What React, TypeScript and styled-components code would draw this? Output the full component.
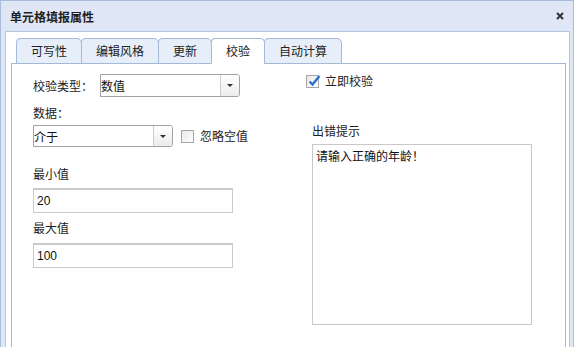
import styled, { createGlobalStyle } from 'styled-components'

const GlobalStyle = createGlobalStyle`
  html, body {
    margin: 0;
    padding: 0;
  }
  body {
    font-family: "Noto Sans CJK SC", "Microsoft YaHei", sans-serif;
    font-size: 12px;
    color: #222;
    background: #fff;
  }
`

const Window = styled.div`
  width: 574px;
  height: 347px;
  box-sizing: border-box;
  display: flex;
  flex-direction: column;
  background: #dfe6f5;
  border: 1px solid #a9bcd9;
  border-bottom: none;
  overflow: hidden;
`

const TitleBar = styled.div`
  height: 30px;
  flex: none;
  display: flex;
  align-items: center;
  justify-content: space-between;
  padding: 0 8px 0 9px;
  font-weight: bold;
  color: #1f1f1f;
`

const CloseButton = styled.button`
  width: 10px;
  height: 10px;
  padding: 0;
  border: none;
  background: transparent;
  display: flex;
  align-items: center;
  justify-content: center;
  cursor: pointer;
`

const Body = styled.div`
  flex: 1;
  display: flex;
  flex-direction: column;
  margin: 0 3px 0 4px;
  padding: 6px 3px 0 5px;
  background: #fff;
  border: 1px solid #b6c7e0;
  border-bottom: none;
  min-height: 0;
`

const TabStrip = styled.div`
  display: flex;
  padding-left: 5px;
  margin-bottom: -1px;
  position: relative;
  z-index: 1;
`

const Tab = styled.div<{ $active?: boolean }>`
  height: 24px;
  line-height: 24px;
  padding: 0 14px;
  border: 1px solid #a3b9d6;
  border-bottom-color: ${({ $active }) => ($active ? '#fff' : '#a3b9d6')};
  border-radius: 4px 5px 0 0;
  background: ${({ $active }) => ($active ? '#fff' : '#e6eef9')};
  color: #222;
  & + & {
    margin-left: -1px;
  }
`

const Panel = styled.div`
  flex: 1;
  display: flex;
  align-items: flex-start;
  padding: 10px 0 0 21px;
  border: 1px solid #a3b9d6;
  border-bottom: none;
`

const LeftColumn = styled.div`
  width: 207px;
  display: flex;
  flex-direction: column;
`

const RightColumn = styled.div`
  margin-left: 66px;
  display: flex;
  flex-direction: column;
`

const FieldRow = styled.div<{ $gap?: number }>`
  display: flex;
  align-items: center;
  margin-top: ${({ $gap }) => $gap ?? 0}px;
  white-space: nowrap;
`

const InlineLabel = styled.span`
  width: 67px;
  line-height: 16px;
`

const Label = styled.div<{ $gap: number; $indent?: number }>`
  line-height: 16px;
  margin-top: ${({ $gap }) => $gap}px;
  padding-left: ${({ $indent }) => $indent ?? 0}px;
`

const SelectBox = styled.div<{ $width: number; $height: number }>`
  box-sizing: border-box;
  width: ${({ $width }) => $width}px;
  height: ${({ $height }) => $height}px;
  flex: none;
  display: flex;
  border: 1px solid #a2a2a2;
  border-radius: 0 3px 3px 0;
  background: #fff;
`

const SelectValue = styled.span`
  flex: 1;
  padding-left: 0;
  display: flex;
  align-items: center;
  color: #111;
`

const SelectArrow = styled.span`
  width: 18px;
  border-left: 1px solid #cdcdcd;
  border-radius: 0 2px 2px 0;
  background: linear-gradient(#ffffff, #ececec);
  display: flex;
  align-items: center;
  justify-content: center;
  &::after {
    content: '';
    border-left: 3px solid transparent;
    border-right: 3px solid transparent;
    border-top: 3px solid #333;
  }
`

const CheckLabel = styled.label<{ $gap?: number }>`
  display: flex;
  align-items: center;
  flex: none;
  gap: 6px;
  margin-left: ${({ $gap }) => $gap ?? 0}px;
  height: 14px;
  line-height: 14px;
  white-space: nowrap;
`

const Box = styled.span`
  box-sizing: border-box;
  width: 13px;
  height: 13px;
  border: 1px solid #a6a6a6;
  background: linear-gradient(135deg, #e8e8e8, #ffffff);
  position: relative;
  flex: none;
`

const CheckMark = styled.svg`
  position: absolute;
  left: 0;
  top: -2px;
`

const TextInput = styled.div<{ $gap: number }>`
  box-sizing: border-box;
  width: 200px;
  height: 25px;
  margin-top: ${({ $gap }) => $gap}px;
  padding-left: 3px;
  display: flex;
  align-items: center;
  border: 1px solid #cacaca;
  border-top-width: 2px;
  color: #111;
  font-family: "Liberation Sans", Arial, sans-serif;
  font-size: 12px;
`

const TextArea = styled.div`
  box-sizing: border-box;
  width: 220px;
  height: 181px;
  margin: 5px 0 0 6px;
  padding: 2px 3px;
  border: 1px solid #c8c8c8;
  line-height: 17px;
  color: #111;
`

function Checkbox({ checked, label, gap }: { checked?: boolean; label: string; gap?: number }) {
  return (
    <CheckLabel $gap={gap}>
      <Box>
        {checked && (
          <CheckMark width="14" height="14" viewBox="0 0 14 14">
            <path d="M2.5 7.5 L5.5 10.5 L12.5 2" fill="none" stroke="#2b6fcc" strokeWidth="2.4" />
          </CheckMark>
        )}
      </Box>
      {label}
    </CheckLabel>
  )
}

function Select({ value, width, height }: { value: string; width: number; height: number }) {
  return (
    <SelectBox $width={width} $height={height}>
      <SelectValue>{value}</SelectValue>
      <SelectArrow />
    </SelectBox>
  )
}

const tabs = ['可写性', '编辑风格', '更新', '校验', '自动计算']

export default function App() {
  return (
    <>
      <GlobalStyle />
      <Window>
        <TitleBar>
          单元格填报属性
          <CloseButton aria-label="关闭">
            <svg width="8" height="8" viewBox="0 0 8 8">
              <path d="M1 1 L7 7 M7 1 L1 7" stroke="#333" strokeWidth="2" />
            </svg>
          </CloseButton>
        </TitleBar>
        <Body>
          <TabStrip>
            {tabs.map((t) => (
              <Tab key={t} $active={t === '校验'}>{t}</Tab>
            ))}
          </TabStrip>
          <Panel>
            <LeftColumn>
              <FieldRow>
                <InlineLabel>校验类型：</InlineLabel>
                <Select value="数值" width={140} height={23} />
              </FieldRow>
              <Label $gap={8}>数据：</Label>
              <FieldRow $gap={4}>
                <Select value="介于" width={140} height={22} />
                <Checkbox label="忽略空值" gap={8} />
              </FieldRow>
              <Label $gap={19}>最小值</Label>
              <TextInput $gap={6}>20</TextInput>
              <Label $gap={7}>最大值</Label>
              <TextInput $gap={7}>100</TextInput>
            </LeftColumn>
            <RightColumn>
              <Checkbox checked label="立即校验" />
              <Label $gap={35} $indent={6}>出错提示</Label>
              <TextArea>请输入正确的年龄！</TextArea>
            </RightColumn>
          </Panel>
        </Body>
      </Window>
    </>
  )
}
